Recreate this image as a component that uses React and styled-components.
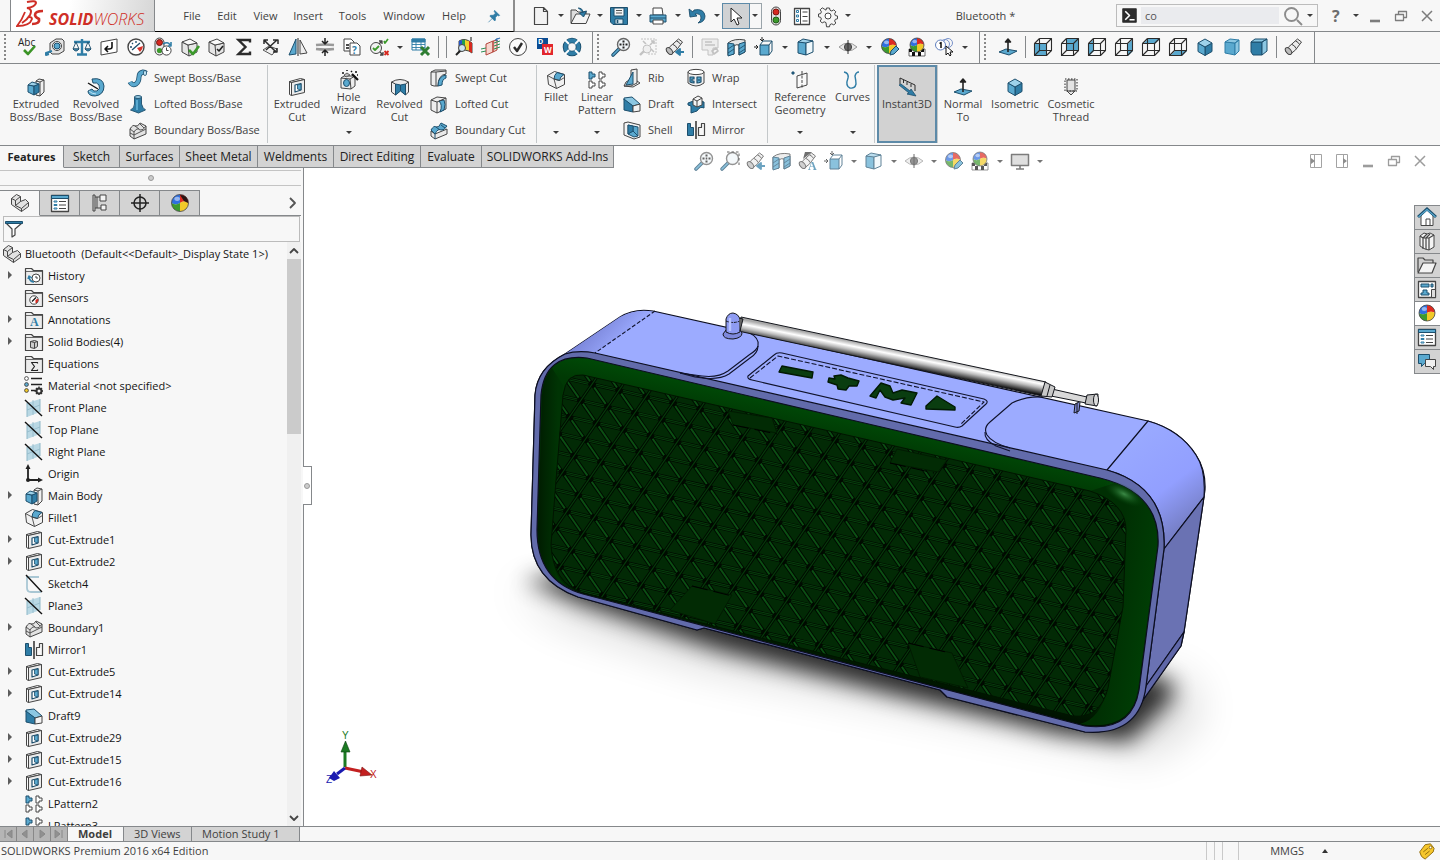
import React from "react";
import styled, { createGlobalStyle, css } from "styled-components";

const font = `"Open Sans", "Noto Sans", sans-serif`;
const line = "#85888b";
const panel = "#f7f7f7";
const tabGrey = "#d3d3d3";

const GlobalStyle = createGlobalStyle`
  * { box-sizing: border-box; }
  body { margin: 0; background: #fff; font: 11px/14px ${font}; color: #3f3f3f; }
  button, input { font: inherit; color: inherit; }
`;

/* ---------- icons ---------- */

const B = "#5aa9cf";
const D = "#1d4f6d";
const M = "#2f7da6";
const K = "#454545";

const Svg = styled.svg`
  display: block;
  flex: none;
  overflow: visible;
  fill: none;
  stroke: ${K};
  stroke-width: 1;
  stroke-linejoin: round;
`;

const plane = (
  <>
    <path d="M3 5l13-4v13L3 19z" fill="#b9d8e4" stroke="none" />
    <path d="M9 2v15M3 12l13-5" stroke="#8fb8c8" strokeWidth=".8" />
    <path d="M3 5v14M16 1v13" stroke="#8fb8c8" />
    <path d="M1 2l17 16" stroke="#111" strokeWidth="1.4" />
  </>
);

const ball = (r, cx = 10, cy = 10) => (
  <g stroke="none">
    <path d={`M${cx} ${cy}V${cy - r}A${r} ${r} 0 0 0 ${cx - r} ${cy}q${r / 2} ${r / 3} ${r} 0z`} fill="#2f6fe0" />
    <path d={`M${cx} ${cy}V${cy - r}A${r} ${r} 0 0 1 ${cx + r} ${cy}q${-r / 2} ${-r / 3} ${-r} 0z`} fill="#dd2a22" />
    <path d={`M${cx} ${cy}V${cy + r}A${r} ${r} 0 0 1 ${cx - r} ${cy}q${r / 2} ${r / 3} ${r} 0z`} fill="#3d9a2e" />
    <path d={`M${cx} ${cy}V${cy + r}A${r} ${r} 0 0 0 ${cx + r} ${cy}q${-r / 2} ${-r / 3} ${-r} 0z`} fill="#f2c928" />
    <circle cx={cx} cy={cy} r={r} fill="none" stroke="#444" strokeWidth=".8" />
    <ellipse cx={cx - r / 3} cy={cy - r / 2} rx={r / 3} ry={r / 4} fill="#fff" opacity=".5" />
  </g>
);

const checker = (
  <>
    <path d="M2 12h16v7H2z" fill="#fff" strokeWidth=".8" />
    <path d="M2 12h3v3H2zM8 12h3v3H8zM14 12h3v3h-3zM5 15h3v4H5zM11 15h3v4h-3z" fill="#111" stroke="none" />
  </>
);

const wire = (
  <path d="M1.500 6.500h12v12h-12zM6.500 1.500h12v12h-5M6.500 1.500v12h7M6.500 13.500l-5 5M1.500 6.500l5-5M13.500 6.500l5-5M13.500 18.500l5-5" stroke="#2b2b2b" strokeWidth="1.1" />
);
const face = (d) => (
  <>
    <path d={d} fill={B} stroke="none" />
    {wire}
  </>
);

const folder = (
  <>
    <path d="M1.500 18.500v-16h6l2 2h9v14z" fill="#ececec" strokeWidth="1.2" />
    <path d="M1.500 5.500h17" strokeWidth=".8" />
  </>
);
const flashlight = (
  <>
    <path d="M1.500 13l3-3 9-8 4 3-6 8-5 4q-4 1-5-4z" fill="#ececec" />
    <ellipse cx="4.500" cy="14" rx="2.400" ry="4" fill="#bdbdbd" transform="rotate(-40 4.500 14)" />
    <path d="M8 7.500q3 1 4 4M11.500 4q3 1 4 3.500" />
  </>
);
const lens = (
  <>
    <path d="M2 18l6-6" stroke={D} strokeWidth="3.6" strokeLinecap="round" />
    <path d="M2 18l6-6" stroke={B} strokeWidth="1.6" strokeLinecap="round" />
    <circle cx="12.500" cy="7.500" r="6" fill="#f2f7fa" stroke="#666" strokeWidth="1.4" />
  </>
);
const greyBox = (
  <>
    <path d="M2 5l6 3 9-2v9l-8 4-7-4z" fill="#e6e6e6" />
    <path d="M2 5l8-3 7 4-9 2z" fill="#fafafa" />
    <path d="M8 8l1 11" />
  </>
);
const patternGlyph = (
  <>
    <path d="M2 2h3v2h3v3H5v2H2z" fill={B} stroke={D} />
    <path d="M12 2h3v2h3v3h-3v2h-3zM2 11h3v2h3v3H5v2H2zM12 11h3v2h3v3h-3v2h-3z" fill="#fff" />
  </>
);

const icons = {
  abc: (
    <>
      <text x="0" y="9" fontSize="10" fontFamily="Open Sans" fill="#222" stroke="none">Abc</text>
      <path d="M6 13l4 4 7-8" stroke="#3b9426" strokeWidth="2.6" />
    </>
  ),
  measure: (
    <>
      <path d="M5 6l6-4h6l2 2v10l-5 3H7l-2-2z" fill="#e4e4e4" />
      <circle cx="12" cy="9" r="4.500" fill="#fff" />
      <circle cx="12" cy="9" r="3" fill={B} stroke={D} />
      <path d="M7 14l-6 2v2l3-1" stroke={M} strokeWidth="2" />
    </>
  ),
  scale: (
    <>
      <path d="M10 2v15M5 17.500h10M2 5h16" stroke={M} strokeWidth="2.4" />
      <path d="M4 5l-3 7h6zM16 5l-3 7h6z" stroke={D} strokeWidth=".9" />
      <path d="M1 12h6q-3 4-6 0zM13 12h6q-3 4-6 0z" fill={B} stroke={D} />
    </>
  ),
  section2: (
    <>
      <path d="M2 5l16-3v13L2 18z" fill="#fff" />
      <path d="M13 5v5q0 2-3 2H7M9 9l-3 3 3 3" stroke="#111" strokeWidth="1.6" />
    </>
  ),
  gauge: (
    <>
      <circle cx="10" cy="10" r="8" fill="#fff" strokeWidth="1.4" />
      <path d="M17 9a8 8 0 0 1-3 6l-3-4z" fill="#d6322a" stroke="none" />
      <path d="M6 13l8-7M4 10h2M10 4v2M6 6l1 1" stroke={D} strokeWidth="1.3" />
    </>
  ),
  lightClock: (
    <>
      <rect x="2" y="1" width="9" height="17" rx="4.500" fill="#e8e8e8" />
      <circle cx="6.500" cy="5.500" r="3" fill="#d6281f" stroke="#6d1510" />
      <circle cx="6.500" cy="13.500" r="2.600" fill="#3b9a2b" stroke="none" />
      <circle cx="13.500" cy="13.500" r="4.600" fill="#fff" />
      <path d="M13.500 10.500v3h2" />
      <path d="M10 7q5-3 7 1M18 5v4h-3" stroke={M} strokeWidth="1.600" />
    </>
  ),
  boxCheck: (
    <>
      {greyBox}
      <path d="M9 13l4 4 6-8" stroke="#3b9a2b" strokeWidth="2.6" />
    </>
  ),
  boxTick: (
    <>
      {greyBox}
      <path d="M10 12l2 2 4-5" stroke="#222" strokeWidth="1.6" />
    </>
  ),
  sigma: <path d="M16 5.500V3H4.500l7 7-7 7H16v-2.500" stroke="#2c2c2c" strokeWidth="2.4" strokeLinejoin="miter" />,
  arrowsX: (
    <>
      <path d="M2 13l6-4 8 3-5 6z" fill="#f0f0f0" strokeWidth=".9" />
      <path d="M3 3l12 12M16 3L5 13M3 7V3h4M12 3h5v4M16 11v4h-4" stroke="#2b2b2b" strokeWidth="1.5" />
    </>
  ),
  draftTri: (
    <>
      <path d="M8 2v15l-7 1z" fill={B} stroke={D} />
      <path d="M10 1v18" strokeWidth="1.2" />
      <path d="M12 3l7 13-7 1z" fill="#eee" />
    </>
  ),
  thickness: (
    <>
      <path d="M1 8q9-1 18 0M1 12q9 1 18 0" stroke="#999" strokeWidth="2.4" />
      <path d="M10 1v5M7 4l3 3 3-3M10 19v-5M7 16l3-3 3 3" stroke="#222" strokeWidth="1.500" />
    </>
  ),
  compareDoc: (
    <>
      <path d="M2 2h7l3 3v9H2z" fill="#fff" />
      <path d="M8 6h7l3 3v9H8z" fill="#fff" />
      <path d="M4 8h3M4 11h3" stroke="#111" strokeWidth="1.600" />
      <text x="10" y="17" fontSize="10" fontWeight="700" fontFamily="Open Sans" fill={M} stroke="none">?</text>
    </>
  ),
  checkActive: (
    <>
      <circle cx="7" cy="11" r="5.500" fill="#f2f2f2" />
      <path d="M4 11l2 2 4-4" stroke="#3b9a2b" strokeWidth="1.800" />
      <path d="M10 7l3-3M11 15l3 3M10 4h3v3M14 15v3h-3" strokeWidth="1.300" />
      <path d="M15 4l1 2 3-4" stroke="#3b9a2b" strokeWidth="1.700" />
      <path d="M15.500 14l4 4M19.500 14l-4 4" stroke="#d6281f" strokeWidth="1.800" />
    </>
  ),
  excel: (
    <>
      <path d="M1 2h13v11H1z" fill="#fff" stroke={M} />
      <path d="M1 2h13v3H1z" fill={M} stroke={M} />
      <path d="M1 7.500h13M1 10.500h13M5 3v10M10 3v10" stroke={M} strokeWidth=".9" />
      <path d="M10 10l8 8M18 10l-8 8" stroke="#2e7d32" strokeWidth="3" />
    </>
  ),
  rainbow: (
    <>
      <path d="M5 4q6-4 13 2v10q-6-5-13-1z" fill="#f2d22b" stroke="#444" />
      <path d="M5 4l3-1v10l-3 2z" fill="#2455c9" stroke="none" />
      <path d="M8 3l3-.2V13H8z" fill="#25a04a" stroke="none" />
      <path d="M15 4l3 2v10l-3-2z" fill="#d6281f" stroke="none" />
      <circle cx="8" cy="11" r="3.500" fill="#cfe6f0" />
      <path d="M2 18l4-4" stroke="#222" strokeWidth="2" />
      <path d="M17 0v4" strokeWidth="1.300" />
    </>
  ),
  flow: (
    <>
      <path d="M5 7l7-3v11l-7 3zM12 4l4-1v10l-4 2z" fill="#f6d5ce" stroke="#b4453a" />
      <path d="M0 12l5-1M0 15l5-1M13 6l6-2M13 9l6-2M13 12l6-2" stroke="#2d8f55" />
      <path d="M16 1v3M14 3l5-2" stroke="#356fb0" strokeWidth="1.200" />
    </>
  ),
  okCircle: (
    <>
      <circle cx="10" cy="10" r="8.500" fill="#fbfbfb" />
      <path d="M6 10l3 4 5-8" stroke="#2b2b2b" strokeWidth="2.400" />
    </>
  ),
  dw: (
    <>
      <rect x="2" y="1" width="11" height="11" fill="#0a4c93" stroke="none" />
      <rect x="7" y="7" width="11" height="11" fill="#e2262d" stroke="none" />
      <text x="3" y="7" fontSize="7" fontWeight="700" fontFamily="Open Sans" fill="#fff" stroke="none">D</text>
      <text x="9" y="16" fontSize="8" fontWeight="700" fontFamily="Open Sans" fill="#fff" stroke="none">W</text>
    </>
  ),
  lifebuoy: (
    <>
      <circle cx="10" cy="10" r="6.500" stroke={D} strokeWidth="5.600" />
      <circle cx="10" cy="10" r="6.500" stroke={M} strokeWidth="3.800" />
      <path d="M3 3l4 4M17 3l-4 4M3 17l4-4M17 17l-4-4" stroke="#fff" strokeWidth="1.800" />
    </>
  ),
  zoomFit: (
    <>
      {lens}
      <path d="M12.500 3.500v8M8.500 7.500h8" strokeDasharray="2 4" stroke="#222" strokeWidth="2" />
      <path d="M12.500 6.500v2" stroke="#222" strokeWidth="1.600" />
    </>
  ),
  zoomArea: (
    <>
      {lens}
      <path d="M7 1h12v13" strokeDasharray="2.500 2" stroke="#222" />
    </>
  ),
  zoomGrey: (
    <g stroke="#c2c2c2">
      <path d="M3 2h15v15H9" strokeDasharray="2 1" />
      <circle cx="9" cy="12" r="4" fill="#efefef" />
      <path d="M2 18l4-4" strokeWidth="2.400" />
      <path d="M5 4l3 3M16 4l-4 4M13 4h3v3M13 12l3 3" strokeWidth="1.600" />
    </g>
  ),
  prevView: (
    <>
      {flashlight}
      <path d="M19 15h-6M15 12l-4 3 4 3z" fill={M} stroke={M} strokeWidth="1.800" />
    </>
  ),
  flash: flashlight,
  flashA: (
    <>
      {flashlight}
      <path d="M7 1h7L5 8z" fill="#333" stroke="none" />
      <text x="10" y="19" fontSize="12" fontWeight="700" fontFamily="Liberation Serif" fill={M} stroke="none">A</text>
    </>
  ),
  boardGrey: (
    <g stroke="#c2c2c2">
      <path d="M2 2h16v9h-5v7H8v-5H2z" fill="#ededed" />
      <path d="M5 5h7M5 8h10M12 14l4-3 2 3-4 3z" strokeWidth="1.600" />
    </g>
  ),
  sectionView: (
    <>
      <path d="M1 6q6-5 17-3v12l-6 3V8q-3-1-5 1v8l-6 1z" fill="#e6e6e6" />
      <path d="M1 6l6 1v10l-6 2zM12 7l6-2v10l-6 3z" fill={B} stroke={D} />
      <path d="M1 12l6-4M1 16l6-4M12 12l6-4M12 16l6-4" stroke={D} strokeWidth=".9" />
    </>
  ),
  viewOrient: (
    <>
      <path d="M6 8h9v10H6z" fill={B} stroke={D} />
      <path d="M6 8l3-4h9v10l-3 4M15 8l3-4" stroke={D} />
      <path d="M8 0v4M6 2l2 2 2-2M0 10h4M2 8l2 2-2 2" stroke="#222" />
    </>
  ),
  displayStyle: (
    <>
      <path d="M2 5h8v13l-8-2z" fill={B} stroke={D} />
      <path d="M10 5l7-1v11l-7 3z" fill="#eef7fb" stroke={D} />
      <path d="M2 5l5-3 10 2-7 2z" fill="#9fd0e8" stroke={D} />
    </>
  ),
  eye: (
    <>
      <path d="M1 10q9-8 18 0-9 8-18 0z" fill="#e8e8e8" stroke="#999" />
      <circle cx="10" cy="10" r="3.600" fill="#666" stroke="#444" />
      <path d="M10 3v14" stroke="#333" />
    </>
  ),
  appearance: (
    <>
      {ball(7.5, 9, 9)}
      <path d="M10 18l1-4 5-5 3 3-5 5z" fill={B} stroke={D} />
    </>
  ),
  scene: (
    <>
      {checker}
      {ball(7, 10, 8)}
    </>
  ),
  oneClick: (
    <>
      <circle cx="14" cy="6" r="4.500" stroke="#7892c9" />
      <circle cx="11" cy="7" r="4.500" stroke="#7892c9" />
      <circle cx="6.500" cy="8" r="5" fill="#fff" stroke="#5f7fbf" />
      <path d="M5.500 6.500l1.500-1v5.500" stroke="#111" strokeWidth="1.500" />
      <path d="M12 9v9l2-2 2 3 1-1-1-3h3z" fill="#fff" stroke="#111" />
    </>
  ),
  normalTo: (
    <>
      <path d="M1 15l7-3 11 2-8 4z" fill={B} stroke={D} />
      <path d="M10 15V3M7.500 5L10 2l2.500 3z" stroke="#222" strokeWidth="1.600" />
    </>
  ),
  vFront: face("M2 7h12v12H2z"),
  vBack: face("M7 2h12v12H7z"),
  vLeft: face("M2 7l5-5v12l-5 5z"),
  vRight: face("M14 7l5-5v12l-5 5z"),
  vTop: face("M2 7l5-5h12l-5 5z"),
  vBottom: face("M2 19l5-5h12l-5 5z"),
  isometric: (
    <>
      <path d="M10 10v8.500l7-4V6z" fill={M} stroke={D} />
      <path d="M10 10v8.500l-7-4V6z" fill={B} stroke={D} />
      <path d="M10 2l7 4-7 4-7-4z" fill="#9ed2ea" stroke={D} />
    </>
  ),
  trimetric: (
    <>
      <path d="M3 5l10 1v12l-10-2z" fill={B} stroke={M} />
      <path d="M3 5l5-3 9 1-4 3zM13 6l4-3v11l-4 4z" fill="#8cc7e2" stroke={M} />
    </>
  ),
  dimetric: (
    <>
      <path d="M2 5h11v13H4l-2-3z" fill={M} stroke={D} />
      <path d="M2 5l4-3h12l-5 3zM13 5l5-3v12l-5 4z" fill="#8cc7e2" stroke={D} />
    </>
  ),
  newDoc: <path d="M3.500 1.500h9l4 4v13h-13zM12.500 1.500v4h4" fill="#f2f2f2" strokeWidth="1.200" />,
  open: (
    <>
      <path d="M1 17V4h5l2 2h8v3" fill="#ddd" />
      <path d="M1 17.500L6 8h14l-4 9.500z" fill="#f4f4f4" />
      <path d="M8 2q5 0 5 5M9.500 7l4 4 3-6z" fill={M} stroke={D} />
    </>
  ),
  save: (
    <>
      <path d="M1.500 1.500h17v17H4l-2.500-2.500z" fill={M} stroke={D} />
      <path d="M5 2h10v8H5z" fill="#f5f5f5" stroke={D} />
      <path d="M7 4.500h6M7 7h6" strokeWidth=".9" />
      <path d="M6 13h8v5H6z" fill="#d6e8f0" stroke={D} />
      <path d="M8.500 14v3" stroke={D} strokeWidth="1.600" />
    </>
  ),
  print: (
    <>
      <path d="M5 2h9l1 7H5z" fill="#fff" />
      <path d="M2 9h16v7H2z" fill={B} stroke={D} />
      <path d="M2 12h16" stroke={D} />
      <path d="M5 14h10v4H5z" fill="#fff" />
    </>
  ),
  undo: <path d="M2 3l1 8 7-1-2-2q6-1 6 4 0 3-3 5 7-1 7-7-1-8-11-6L6 6z" fill={M} stroke={D} strokeWidth=".9" />,
  cursor: <path d="M5 2v14l3-3 3 6 2-1-2-6h5z" fill="#fff" stroke="#222" />,
  traffic: (
    <>
      <rect x="5.500" y="1" width="9" height="18" rx="4.500" fill="#dedede" />
      <circle cx="10" cy="6" r="3" fill="#d6281f" stroke="#7c1610" />
      <circle cx="10" cy="14" r="3" fill="#3b9a2b" stroke="#1f5c16" />
    </>
  ),
  options: (
    <>
      <path d="M2.500 2.500h15v16h-15z" fill="#fff" strokeWidth="1.300" />
      <path d="M8.500 2v16" />
      <path d="M4.500 4.500h2v2h-2zM4.500 9h2v2h-2zM4.500 13.500h2v2h-2z" stroke={M} />
      <path d="M10.500 6h5M10.500 10.500h5M10.500 15h5" />
    </>
  ),
  gear: (
    <>
      <path
        d="M8.500 2h3l.5 2.200 1.800.8 2-1.200 2 2-1.200 2 .8 1.800 2.100.4v2.800l-2.100.5-.8 1.700 1.200 2-2 2-2-1.200-1.800.8-.5 2.200h-3L8 16.600l-1.800-.8-2 1.200-2-2 1.200-2-.8-1.700-2.100-.5V8l2.100-.4.8-1.800-1.200-2 2-2 2 1.200L8 4.200z"
        fill="#f5f5f5"
      />
      <circle cx="10" cy="10" r="3" fill="#fff" />
    </>
  ),
  pin: <path d="M11 2l7 7-1 1-2-1-3 3v4l-1 1-7-7 1-1h4l3-3-2-3zM8 13l-6 6" fill={M} stroke={M} strokeWidth="1" />,
  prompt: (
    <>
      <rect x="2" y="2" width="16" height="16" fill="#2c2c2c" stroke="#2c2c2c" />
      <path d="M5 5l5 5-5 5M10 15h6" stroke="#fff" strokeWidth="1.800" />
    </>
  ),
  search: <path d="M14 14l5 5M15 8.500a6.500 6.500 0 1 1-13 0 6.500 6.500 0 0 1 13 0z" stroke="#8c8c8c" strokeWidth="1.900" />,
  help: <text x="6" y="16" fontSize="16" fontWeight="700" fontFamily="Open Sans" fill="#6d6d6d" stroke="none">?</text>,
  minimize: <path d="M5 15h10" stroke="#7c7c7c" strokeWidth="2.600" />,
  restore: <path d="M4.500 8.500h8v6h-8zM7.500 8V5.500h8v6h-3" stroke="#7c7c7c" strokeWidth="1.300" />,
  close: <path d="M5 5l10 10M15 5L5 15" stroke="#7c7c7c" strokeWidth="1.500" />,
  paneLeft: (
    <>
      <path d="M4.500 3.500h11v13h-11zM8.500 3.500v13" stroke="#858585" />
      <path d="M9 10l-4-3v6z" fill="#666" stroke="none" />
    </>
  ),
  paneRight: (
    <>
      <path d="M4.500 3.500h11v13h-11zM11.500 3.500v13" stroke="#858585" />
      <path d="M11 7v6l4-3z" fill="#666" stroke="none" />
    </>
  ),
  monitor: (
    <>
      <path d="M1.500 3.500h17v11h-17z" fill="#d2d2d2" strokeWidth="1.500" />
      <path d="M10 14v4M6 18h8" strokeWidth="1.600" />
    </>
  ),
  extrude: (
    <>
      <path d="M10 4l3-2 5 1v12l-4 4-4-1z" fill="#f0f0f0" />
      <path d="M14 5v14M10 4l4 1 4-2" />
      <path d="M2 8l6 1v9l-6-3z" fill={B} stroke={D} />
      <path d="M8 9l5-2v8l-5 3z" fill={M} stroke={D} />
      <path d="M2 8l4-3 7 2-5 2z" fill="#9ed2ea" stroke={D} />
    </>
  ),
  revolve: (
    <>
      <path d="M6 2q11-2 12 7 0 9-9 10-7 0-7-5l4-2q1 3 5 2 4-2 2-6-2-3-6-2z" fill={B} stroke={D} />
      <path d="M2 6l10 6" stroke="#111" strokeWidth="1.400" />
      <path d="M3 14q3 3 7 3" stroke="#bfe2f2" />
    </>
  ),
  swept: (
    <>
      <path d="M2 14q2 4 6 2 3-2 3-7 0-4 4-5 2 0 3 1" stroke={D} strokeWidth="5" />
      <path d="M2 14q2 4 6 2 3-2 3-7 0-4 4-5 2 0 3 1" stroke={B} strokeWidth="3.400" />
      <ellipse cx="17" cy="5" rx="1.600" ry="2.600" fill="#bfe2f2" stroke={D} strokeWidth=".8" />
    </>
  ),
  loft: (
    <>
      <path d="M6.500 3h7v7q1 4 4 6l-7 3-8-3q4-2 4-6z" fill={M} stroke={D} strokeWidth=".9" />
      <ellipse cx="10" cy="3" rx="3.500" ry="1.400" fill="#a5d6ec" stroke={D} />
      <path d="M9 6v10" stroke={B} strokeWidth="2" />
    </>
  ),
  boundary: (
    <>
      <path d="M2 9q3-5 5-3 3 1 5-3l6 3v8L6 19l-4-3z" fill="#e3e3e3" />
      <path d="M2 9l4 3q3-5 6-2 3 1 6-4M6 12v7M7 6l4 3M12 4l4 4M2 13l4 2 12-6" strokeWidth=".9" />
    </>
  ),
  boundaryBlue: (
    <>
      <path d="M2 11l4 3 12-5v5L6 19l-4-3z" fill="#e9e9e9" />
      <path d="M2 10q3-5 5-3 3 1 5-4l6 3q-3 5-6 4-3-2-6 4z" fill={B} stroke={D} />
      <path d="M7 7l4 3M12 5l4 3M6 14v5" stroke={D} />
    </>
  ),
  cutExtrude: (
    <>
      <path d="M2.500 4.500l2 1v13l-2-1zM2.500 4.500l11-3 4 1-13 3z" fill="#fafafa" />
      <path d="M4.500 5.500l13-3v13l-13 3z" fill="#ececec" />
      <path d="M8 8l6-1.500V13l-6 2z" fill="#fff" stroke={D} strokeWidth="1.200" />
      <path d="M10.500 8L14 7v6l-3.500-1z" fill={B} stroke={D} strokeWidth=".8" />
    </>
  ),
  hole: (
    <>
      <path d="M2 8l3-2h11v10l-4 3-10-1z" fill="#ededed" />
      <path d="M2 8l9 1 5-3M11 9l1 10" />
      <ellipse cx="7.500" cy="13" rx="3" ry="3.500" fill={B} stroke={D} />
      <path d="M5 5l3-2 3 2-4 2z" fill="#bbb" strokeWidth=".8" />
      <path d="M13 4l6 6" stroke="#111" strokeWidth="2.200" />
      <path d="M4 2v2M8 0v1M17 1v2M12 1l1 1M18 5h1" stroke="#111" strokeWidth="1.500" />
    </>
  ),
  cutRevolve: (
    <>
      <path d="M1.500 5q8.500-5 17 0v10l-3 3-5-5-5 5-4-3z" fill="#ececec" />
      <path d="M5.500 7l5 1v6l-5 4zM10.500 8l5-1v11l-5-4z" fill={M} stroke={D} />
      <path d="M1.500 5l4 2M18.500 5l-3 2" />
    </>
  ),
  cutSwept: (
    <>
      <path d="M2 4l4-2h11v4q-8 1-8 12H5l-3-1z" fill="#ededed" />
      <path d="M17 7q-8 1-8 11l4-1q0-6 4-7z" fill={B} stroke={D} />
      <path d="M2 4h5v14M7 4l10-1" />
    </>
  ),
  cutLoft: (
    <>
      <path d="M2 6l6-3 9 1v11l-9 4-6-3z" fill="#ededed" />
      <path d="M10 7q4 4 1 11l4-2q2-6 0-10z" fill={B} stroke={D} />
      <path d="M2 6l6 2v11M8 8l9-4" />
    </>
  ),
  fillet: (
    <>
      <path d="M1.500 5.500l7-4 10 3v10l-8 4-8-4z" fill="#f1f1f1" />
      <path d="M8 9q0-4 3-6.500l7 2q-4 2-4.500 6z" fill={B} stroke={D} />
      <path d="M1.500 5.500L8 9l2.500 9.500M8 9l5.500 1.500M13.500 10.500l5-3" strokeWidth=".9" />
    </>
  ),
  pattern: patternGlyph,
  rib: (
    <>
      <path d="M9 2l6-1v14l-6 3H2l2-4 5-3z" fill="#ededed" />
      <path d="M11 4v12l-7 1z" fill={B} stroke={D} />
      <path d="M15 13l3 2-7 4-9-1" />
    </>
  ),
  draft: (
    <>
      <path d="M2 4l8-1 8 7-7 2-9-6z" fill="#8cc7e2" stroke={D} />
      <path d="M2 5l9 7v6l-9-2z" fill={M} stroke={D} />
      <path d="M11 12l7-2v7l-7 1z" fill="#f4f4f4" />
    </>
  ),
  shell: (
    <>
      <path d="M2 3l4-1 12 3v12l-6 2-10-4z" fill="#f4f4f4" />
      <path d="M6 5l10 2v9l-4 1-6-3z" fill={B} stroke={D} />
      <path d="M11 6v5l-5 3M11 11l5 5" stroke={D} />
      <path d="M6 5v9l5-3V6z" fill={M} stroke={D} strokeWidth=".8" />
    </>
  ),
  wrap: (
    <>
      <path d="M2 4v11q8 6 16 0V4" fill="#f1f1f1" />
      <ellipse cx="10" cy="4" rx="8" ry="2.600" fill="#fff" />
      <path d="M8 9H4v5q2 1 4 1v-2H6v-2h2zM11 9h4v5q-2 1-4 1zM13 11v2" fill={B} stroke={D} strokeWidth="1.200" />
    </>
  ),
  intersect: (
    <>
      <path d="M2 9l8-3 8 2v6q-4-2-7 3l-6 2v-7l-3-1z" fill={M} stroke={D} />
      <path d="M7 5l5-3 4 2v7l-5 2-4-2z" fill="#f4f4f4" />
      <path d="M7 5l4 2v6M11 7l5-3" />
    </>
  ),
  mirror: (
    <>
      <path d="M1.500 3.500h3v4h3v8h-6z" fill={M} stroke={D} />
      <path d="M10 1v18" stroke="#111" strokeWidth="1.300" />
      <path d="M18.500 3.500h-3v4h-3v8h6z" fill="#f8f8f8" strokeWidth="1.200" />
    </>
  ),
  refGeom: (
    <>
      <path d="M2 2h2v2H2z" fill={M} stroke={D} />
      <path d="M7 6l10-3v12l-10 3z" fill="#fafafa" />
      <path d="M12 1v18" strokeDasharray="3 1.500" />
    </>
  ),
  curves: <path d="M1 2q5 1 4 6-3 8 2 10 5 1 6-4 0-3-1-8 1-4 4-4" stroke={M} strokeWidth="1.400" />,
  instant: (
    <>
      <path d="M3 7V1l15 7v6M6.500 6V3M10 8V5M14 10V7" stroke="#2b2b2b" />
      <path d="M2 8l2-1 9 7 1-2 5 7-9-2 2-1z" fill={M} stroke={D} strokeWidth=".8" />
    </>
  ),
  thread: (
    <>
      <path d="M6 3h8v11l-4 4-4-4z" fill="#e3e3e3" />
      <path d="M4 2h12v12H4z" strokeDasharray="1.500 1.500" stroke="#222" />
      <path d="M6 14h8" />
    </>
  ),
  part: (
    <>
      <path d="M1.500 5.500l5-4 4 2v5l5-2 3 3v4l-7 5-10-7z" fill="#e2e2e2" />
      <path d="M1.500 5.500l4 2 5-4M5.500 7.500v5l6 3 7-6M11.500 15.500v3M10.500 8.500l-5 4" />
    </>
  ),
  property: (
    <>
      <path d="M1.500 2.500h17v16h-17z" fill="#fff" strokeWidth="1.300" />
      <path d="M1.500 2.500h17v3h-17z" fill={B} stroke={D} />
      <path d="M4 8h3v1H4zM4 11.500h3v1H4zM4 15h3v1H4z" stroke={M} />
      <path d="M9 8.500h7M9 12h7M9 15.500h7" />
    </>
  ),
  config: (
    <>
      <path d="M3 2v16h2V2zM5 4h5M5 15h7M7 4v11" />
      <path d="M10 2h6v6h-6zM11 12h5v5h-5z" fill="#f4f4f4" />
    </>
  ),
  target: (
    <>
      <circle cx="10" cy="10" r="6" stroke="#222" strokeWidth="1.500" />
      <path d="M10 1v18M1 10h18" stroke="#222" strokeWidth="1.500" />
    </>
  ),
  display: (
    <>
      {ball(8.5)}
      <path d="M10 2q8 0 8 8l-4-2z" fill="#2a1513" stroke="none" />
    </>
  ),
  filter: (
    <>
      <path d="M2 4l6 6v8l3-2v-6l7-6z" fill="#fff" strokeWidth="1.200" />
      <path d="M1.500 2.500h17v2h-17z" fill={M} stroke={D} />
    </>
  ),
  history: (
    <>
      {folder}
      <circle cx="12" cy="12" r="4" fill="#fff" />
      <path d="M12 10v2h2" />
      <path d="M5 11q1 5 5 5M4 13l1-3 3 2" stroke={M} strokeWidth="1.500" />
    </>
  ),
  sensors: (
    <>
      {folder}
      <circle cx="10" cy="12" r="4.200" fill="#fff" />
      <path d="M12 12l2-.5q0 2-2 3.500z" fill="#d6281f" stroke="#d6281f" />
      <path d="M8 13.500l4-4" stroke="#111" strokeWidth="1.200" />
    </>
  ),
  annotations: (
    <>
      {folder}
      <text x="6" y="16" fontSize="12" fontWeight="700" fontFamily="Liberation Serif" fill={M} stroke="none">A</text>
    </>
  ),
  bodies: (
    <>
      {folder}
      <path d="M6.500 9.500l4-1 3 1v5l-3 2-4-1zM6.500 9.500l4 1v6M10.500 10.500l3-1" fill="#ccc" />
    </>
  ),
  equations: (
    <>
      {folder}
      <path d="M13.500 9.500v-1h-6l3 4-3 4h6v-1" stroke="#222" strokeWidth="1.200" />
    </>
  ),
  material: (
    <>
      <path d="M7 2.500h11M7 8.500h11M7 14.500h5" stroke="#222" strokeWidth="1.500" />
      <circle cx="2.500" cy="2.500" r="1.900" fill="#fff" strokeWidth=".9" />
      <circle cx="2.500" cy="8.500" r="1.900" fill={B} strokeWidth=".9" />
      <circle cx="2.500" cy="14.500" r="1.900" fill="#f2c928" strokeWidth=".9" />
      <circle cx="15" cy="15" r="2.500" stroke="#333" strokeWidth="2" />
      <path d="M15 10.500v9M10.500 15h9M12 12l6 6M18 12l-6 6" stroke="#333" strokeDasharray="2 4.500" strokeWidth="1.400" />
    </>
  ),
  plane,
  origin: (
    <>
      <path d="M4 4v12h11" stroke="#222" strokeWidth="1.800" />
      <path d="M4 0L1.500 5h5zM19 16l-5-2.500v5z" fill="#222" stroke="none" />
      <circle cx="4" cy="16" r="2" fill="#222" stroke="none" />
    </>
  ),
  sketch: (
    <>
      <path d="M3 2v12q0 4 4 4h10M3 3h12" stroke="#a9c7d4" strokeWidth="1.800" />
      <path d="M2 1l16 17" stroke="#111" strokeWidth="1.400" />
    </>
  ),
  home: (
    <>
      <path d="M4 9v9.500h12V9l-6-6z" fill="#fff" />
      <path d="M9 18v-6h4v6" />
      <path d="M1 10l9-8 9 8" stroke={D} strokeWidth="3" strokeLinejoin="miter" />
      <path d="M1.500 10L10 2.500l8.500 7.500" stroke={B} strokeWidth="1.200" />
    </>
  ),
  books: (
    <>
      <path d="M3 5l4-3 3 1 3-1 4 2v12l-5 3-4-1-5-3z" fill="#f4f4f4" />
      <path d="M3 5l3 2v11M6 7l4-4M9 7v11M9 7l4-4M12 7v12M12 7l5-3M6 7l3 0 3 0" strokeWidth="1.200" />
    </>
  ),
  folderOpen: (
    <>
      <path d="M1 17V3h5l2 2h8v3" fill="#cfcfcf" strokeWidth="1.200" />
      <path d="M1 18l5-10h13l-4 10z" fill="#f4f4f4" strokeWidth="1.200" />
    </>
  ),
  palette: (
    <>
      <path d="M1.500 2.500h17v16h-17z" fill="#fff" strokeWidth="1.300" />
      <path d="M4 5h8v3H4zM14 5h2v3h-2zM4 16v-2h2v-3h4v3h2v2z" fill={B} stroke={D} />
      <path d="M14.500 10.500h4v8h-4z" fill="#ddd" />
    </>
  ),
  ball: ball(8),
  forum: (
    <>
      <path d="M1.500 3.500h11v9h-5l-3 3v-3h-3z" fill={B} stroke={D} />
      <path d="M8.500 8.500h10v7h-2v3l-3-3h-5z" fill="#f0f0f0" />
    </>
  ),
  tag: (
    <>
      <path d="M9 3l6-1 4 5-1 4-9 8q-5-2-6-8z" fill="#f5c62c" stroke="#8a6508" />
      <circle cx="15" cy="6" r="1.500" fill="#fff" stroke="#8a6508" />
      <path d="M7 11l5-4M9 14l5-4" stroke="#8a6508" />
    </>
  ),
};

const Icon = ({ name, size = 20 }) => (
  <Svg width={size} height={size} viewBox="0 0 20 20" aria-hidden="true">
    {icons[name]}
  </Svg>
);

/* ---------- shared ---------- */

const bare = css`
  border: 0;
  padding: 0;
  margin: 0;
  background: none;
`;

const IconButton = styled.button`
  ${bare}
  flex: none;
  display: flex;
  align-items: center;
  justify-content: center;
  width: ${(p) => p.$w || 27}px;
  height: 26px;
`;

const Caret = styled.span`
  width: 0;
  height: 0;
  border: 3px solid transparent;
  border-top: 3px solid #3c3c3c;
  border-bottom: 0;
`;

const Rule = styled.i`
  flex: none;
  width: 1px;
  height: 22px;
  margin: 0 3px 0 4px;
  background: ${line};
`;

const Grip = styled.i`
  flex: none;
  width: 3px;
  height: 26px;
  margin: 0 7px 0 4px;
  background: radial-gradient(circle at 1px 1px, #888 1px, transparent 1px) 0 0 / 3px 4px;
`;

const Tool = ({ item, pitch, caret }) => {
  if (item === "|") return <Rule />;
  if (item === "v")
    return (
      <IconButton $w={caret} aria-label="More">
        <Caret />
      </IconButton>
    );
  return (
    <IconButton $w={pitch} aria-label={item}>
      <Icon name={item} />
    </IconButton>
  );
};

const Tools = ({ items, pitch = 27, caret = 15 }) =>
  items.map((item, i) => <Tool key={i} item={item} pitch={pitch} caret={caret} />);

/* ---------- layout ---------- */

const Page = styled.div`
  display: flex;
  flex-direction: column;
  height: 100vh;
  min-height: 600px;
  overflow: hidden;
  background: ${panel};
`;

const TopBar = styled.header`
  display: flex;
  height: 32px;
  border-bottom: 1px solid ${line};
`;

const LogoBox = styled.div`
  display: flex;
  align-items: center;
  width: 145px;
  margin-left: 10px;
  padding-left: 5px;
  border: solid ${line};
  border-width: 0 1px;
  background: linear-gradient(100deg, #fff 40%, #d5d5d5);
`;

const Menu = styled.nav`
  display: flex;
  align-items: center;
  width: 360px;
  height: 32px;
  padding-left: 20px;
  border-right: 2px solid #8d8d8d;
  border-bottom: 1px solid #000;
`;

const MenuItem = styled.button`
  ${bare}
  flex: none;
  width: ${(p) => p.$w}px;
  text-align: center;
`;

const QuickTools = styled.div`
  display: flex;
  align-items: center;
  width: 340px;
  padding-left: 13px;
`;

const SelectBox = styled.div`
  display: flex;
  height: 26px;
  margin-right: 1px;
  border: 1px solid #9aa4aa;
  border-left: 0;

  button {
    height: 24px;
  }

  button:first-child {
    background: #d0d2d4;
    outline: 1px solid #5d8aa8;
  }
`;

const DocTitle = styled.h1`
  flex: 1;
  margin: 0;
  text-align: center;
  font: 11px/31px ${font};
`;

const SearchBox = styled.label`
  display: flex;
  align-items: center;
  width: 202px;
  height: 23px;
  margin: 4px 5px 0 0;
  padding-left: 4px;
  border: 1px solid #bcbcbc;

  input {
    flex: 1;
    min-width: 0;
    height: 17px;
    margin: 0 4px 0 3px;
    padding: 0 4px;
    border: 0;
    background: #eaebee;
    color: #555;
  }
`;

const WindowTools = styled.div`
  display: flex;
  align-items: center;
`;

const ToolRow = styled.div`
  display: flex;
  align-items: center;
  height: 32px;
  padding-bottom: 1px;
  border-bottom: 1px solid ${line};
`;

const Divider = styled.i`
  width: 1px;
  height: 32px;
  margin-left: 7px;
  background: ${line};
`;

const Ribbon = styled.div`
  display: flex;
  height: 82px;
  padding: 1px 0 2px 6px;
  border-bottom: 1px solid ${line};
`;

const BigButton = styled.button`
  ${bare}
  position: relative;
  display: flex;
  flex-direction: column;
  align-items: center;
  flex: none;
  width: ${(p) => p.$w}px;
  padding-top: ${(p) => (p.$drop ? 5 : 12)}px;
  line-height: 13px;
  ${(p) =>
    p.$active &&
    css`
      background: #d2d2d2;
      outline: 2px solid #5d8aa8;
      outline-offset: -2px;
    `}

  ${Caret} {
    position: absolute;
    bottom: 9px;
  }
`;

const SmallStack = styled.div`
  flex: none;
  width: ${(p) => p.$w}px;
  padding-left: ${(p) => p.$pad || 2}px;
`;

const SmallButton = styled.button`
  ${bare}
  display: flex;
  align-items: center;
  gap: 6px;
  height: 26px;
  white-space: nowrap;
`;

const GroupRule = styled.i`
  flex: none;
  width: 1px;
  margin-right: ${(p) => p.$after || 3}px;
  background: #c4c8ca;
`;

const TabStrip = styled.div`
  position: relative;
  z-index: 1;
  display: flex;
  height: 22px;
  background: #fff;
`;

const RibbonTab = styled.button`
  ${bare}
  flex: none;
  width: ${(p) => p.$w}px;
  border: solid ${line};
  border-width: 0 1px 1px 0;
  background: ${tabGrey};
  color: #222;
  font-size: 12px;
  ${(p) =>
    p.$active &&
    css`
      font-size: 11px;
      background: ${panel};
      font-weight: 700;
      border-bottom-color: ${panel};
    `}
`;

const HeadsUp = styled.div`
  display: flex;
  align-items: center;
  flex: 1;
  padding: 8px 0 0 77px;
  opacity: 0.7;
`;

const DocControls = styled.div`
  display: flex;
  align-items: center;
  padding: 8px 7px 0 0;
  opacity: 0.75;
`;

const Body = styled.main`
  display: flex;
  flex: 1;
  min-height: 0;
`;

const Side = styled.aside`
  position: relative;
  display: flex;
  flex-direction: column;
  width: 304px;
  flex: none;
  border-right: 1px solid ${line};
`;

const Splitter = styled.div`
  display: flex;
  align-items: center;
  justify-content: center;
  height: 16px;
  margin: 2px 2px 4px 0;
  border: solid #c4c4c4;
  border-width: 1px 0;
`;

const Dot = styled.i`
  width: 6px;
  height: 6px;
  border: 1px solid #999;
  border-radius: 50%;
  background: #ccc;
`;

const SideTabs = styled.div`
  display: flex;
  align-items: center;
  height: 26px;
  margin-right: 2px;
  border-bottom: 1px solid ${line};
`;

const SideTab = styled.button`
  ${bare}
  display: flex;
  align-items: center;
  justify-content: center;
  width: 40px;
  height: 26px;
  margin-bottom: -1px;
  border: solid ${line};
  border-width: 1px 1px 1px 0;
  background: ${(p) => (p.$active ? panel : tabGrey)};
  border-bottom-color: ${(p) => (p.$active ? panel : line)};
`;

const Chevron = styled.button`
  ${bare}
  width: 20px;
  height: 20px;
  margin-left: auto;
`;

const FilterBox = styled.div`
  display: flex;
  align-items: center;
  height: 26px;
  margin: 0 3px;
  border: 1px solid #bbb;
`;

const TreeArea = styled.div`
  display: flex;
  flex: 1;
  min-height: 0;
  margin-right: 2px;
`;

const Tree = styled.ul`
  flex: 1;
  margin: 0;
  padding: 1px 0 0;
  overflow: hidden;
  list-style: none;
  color: #141414;
`;

const TreeRow = styled.li`
  display: flex;
  align-items: center;
  gap: ${(p) => (p.$root ? 3 : 4)}px;
  height: 22px;
  padding-left: ${(p) => (p.$root ? 2 : 8)}px;
  white-space: pre;
`;

const Twist = styled.i`
  width: 12px;
  margin-top: -3px;

  &::before {
    content: "";
    display: ${(p) => (p.$on ? "block" : "none")};
    width: 0;
    border: 4px solid transparent;
    border-left: 4px solid #5c5c5c;
    border-right: 0;
  }
`;

const ScrollTrack = styled.div`
  display: flex;
  flex-direction: column;
  width: 14px;
  background: #f0f0f0;
`;

const ScrollThumb = styled.div`
  flex: none;
  height: 30%;
  background: #cbcbcb;
`;

const ScrollButton = styled.button`
  ${bare}
  display: flex;
  align-items: center;
  justify-content: center;
  height: 17px;
  margin-top: ${(p) => (p.$end ? "auto" : 0)};
`;

const Flyout = styled.button`
  ${bare}
  position: absolute;
  left: 303px;
  top: 298px;
  display: flex;
  align-items: center;
  justify-content: center;
  width: 9px;
  height: 39px;
  border: 1px solid ${line};
  border-left: 0;
  background: #fff;
  z-index: 1;
`;

const Viewport = styled.section`
  position: relative;
  flex: 1;
  min-width: 0;
  background: #fff;
`;

const Canvas = styled.svg`
  display: block;
  width: 100%;
  height: 100%;
  stroke-linejoin: round;
`;

const TaskPane = styled.div`
  position: absolute;
  right: 0;
  top: 37px;
  width: 26px;
  border: 1px solid ${line};
  border-width: 1px 0 0 1px;
`;

const TaskButton = styled.button`
  ${bare}
  display: flex;
  align-items: center;
  justify-content: center;
  width: 25px;
  height: 24px;
  padding: 0 1px 1px 0;
  border-bottom: 1px solid ${line};
  background: ${(p) => (p.$active ? "#fff" : tabGrey)};
`;

const BottomTabs = styled.div`
  display: flex;
  height: 16px;
  border: solid ${line};
  border-width: 1px 0;
`;

const Player = styled.button`
  ${bare}
  width: 17px;
  border-right: 1px solid #888;
  background: #b5b5b5;
`;

const BottomTab = styled.button`
  ${bare}
  width: ${(p) => p.$w}px;
  padding-left: 10px;
  border-right: 1px solid ${line};
  background: ${(p) => (p.$active ? panel : tabGrey)};
  font-weight: ${(p) => (p.$active ? 700 : 400)};
  line-height: 12px;
  text-align: left;
`;

const Status = styled.footer`
  display: flex;
  align-items: center;
  height: 18px;
  padding: 0 5px 0 1px;
`;

const StatusLines = styled.i`
  width: 33px;
  height: 18px;
  margin: 0 31px 0 auto;
  border: solid #c9c9c9;
  border-width: 0 1px;
  background: linear-gradient(90deg, transparent 7px, #c9c9c9 7px 8px, transparent 8px 15px, #c9c9c9 15px 16px, transparent 16px);
`;

const Units = styled.button`
  ${bare}
  display: flex;
  align-items: center;
  gap: 18px;
  margin-right: 89px;
`;

/* ---------- data ---------- */

const menu = [["File", 34], ["Edit", 36], ["View", 41], ["Insert", 44], ["Tools", 45], ["Window", 58], ["Help", 42]];

const tabs = [
  ["Features", 64], ["Sketch", 56], ["Surfaces", 60], ["Sheet Metal", 78], ["Weldments", 76],
  ["Direct Editing", 87], ["Evaluate", 61], ["SOLIDWORKS Add-Ins", 132],
];

const tree = [
  ["history", "History", 1], ["sensors", "Sensors"], ["annotations", "Annotations", 1], ["bodies", "Solid Bodies(4)", 1],
  ["equations", "Equations"], ["material", "Material <not specified>"], ["plane", "Front Plane"], ["plane", "Top Plane"],
  ["plane", "Right Plane"], ["origin", "Origin"], ["extrude", "Main Body", 1], ["fillet", "Fillet1"],
  ["cutExtrude", "Cut-Extrude1", 1], ["cutExtrude", "Cut-Extrude2", 1], ["sketch", "Sketch4"], ["plane", "Plane3"],
  ["boundary", "Boundary1", 1], ["mirror", "Mirror1"], ["cutExtrude", "Cut-Extrude5", 1], ["cutExtrude", "Cut-Extrude14", 1],
  ["draft", "Draft9"], ["cutExtrude", "Cut-Extrude29", 1], ["cutExtrude", "Cut-Extrude15", 1], ["cutExtrude", "Cut-Extrude16", 1],
  ["pattern", "LPattern2"], ["pattern", "LPattern3"],
];

/* ---------- parts ---------- */

const Logo = () => (
  <svg width="138" height="31" viewBox="0 0 138 31" fill="none" stroke="#cf2e26" aria-label="SOLIDWORKS">
    <path d="M11 2q9-2 9 1-1 4-9 5 6 1 3 7-3 5-8 8" strokeWidth="2" />
    <path d="M9 12q-3 8-8 14 13 0 15-7 0-2-3-2" strokeWidth="1.800" />
    <path d="M27 11q-8 0-8 4 0 2 4 4 1 5-7 5" strokeWidth="2.600" />
    <text x="33" y="25" fontFamily="Open Sans" fontStyle="italic" fontSize="16" fill="#cf2e26" stroke="none">
      <tspan fontWeight="700">SOLID</tspan>
      <tspan fontWeight="300">WORKS</tspan>
    </text>
  </svg>
);

const Big = ({ icon, label, w, drop, active }) => (
  <BigButton $w={w} $drop={drop} $active={active}>
    <Icon name={icon} />
    {label.split("|").map((t) => (
      <span key={t}>{t}</span>
    ))}
    {drop && <Caret />}
  </BigButton>
);

const Small = ({ w, pad, items }) => (
  <SmallStack $w={w} $pad={pad}>
    {items.map(([icon, label]) => (
      <SmallButton key={label}>
        <Icon name={icon} />
        {label}
      </SmallButton>
    ))}
  </SmallStack>
);

const mesh = "M583 375L860 438 1090 491Q1126 503 1126 530L1123 607 1108 688Q1100 719 1073 716L860 663 583 593Q553 583 551 545L556 480 563 395Q566 373 583 375Z";

// grille lattice: ribs run along a, along b and along a + b
const a = [27, 6.2];
const b = [-11.3, 16.4];
const at = (u, v) => `${(565 + u * a[0] + v * b[0]).toFixed(1)} ${(378 + u * a[1] + v * b[1]).toFixed(1)}`;
const range = (from, to) => Array.from({ length: to - from + 1 }, (_, i) => from + i);
const ribsA = range(-3, 15).map((k) => `M${at(-3, k)}L${at(34, k)}`).join("");
const ribsB = range(-3, 34).map((k) => `M${at(k, -4)}L${at(k, 26)}`).join("");
const ribsC = range(-16, 26).map((k) => `M${at(k - 3, -3)}L${at(k + 20, 20)}`).join("");

const Grille = () => (
  <g clipPath="url(#meshClip)" fill="none">
    <path d={mesh} fill="#022a05" />
    <path d={ribsA} stroke="#000a00" strokeWidth="4" />
    <path d={ribsC} stroke="#000a00" strokeWidth="3.800" />
    <path d={ribsA} stroke="#07420d" strokeWidth="2.600" strokeDasharray="20 7.700" strokeDashoffset="-4" />
    <path d={ribsA} stroke="#011001" strokeWidth=".8" />
    <path d={ribsC} stroke="#0b4f13" strokeWidth="1.900" strokeDasharray="20 7.500" strokeDashoffset="-4" />
    <path d={ribsB} stroke="#000a00" strokeWidth="3" />
    <path d={ribsB} stroke="#053a0a" strokeWidth="1.200" />
  </g>
);

const Speaker = () => (
  <Canvas viewBox="304 168 1136 658" role="img" aria-label="Bluetooth speaker model">
    <defs>
      <clipPath id="meshClip">
        <path d={mesh} />
      </clipPath>
      <linearGradient id="rod" gradientUnits="userSpaceOnUse" x1="895" y1="350" x2="892" y2="365">
        <stop offset="0" stopColor="#aaa" />
        <stop offset=".3" stopColor="#fff" />
        <stop offset=".55" stopColor="#bbb" />
        <stop offset="1" stopColor="#111" />
      </linearGradient>
      <linearGradient id="bezel" gradientUnits="userSpaceOnUse" x1="880" y1="422" x2="826" y2="665">
        <stop offset="0" stopColor="#004a07" />
        <stop offset=".1" stopColor="#003904" />
        <stop offset=".9" stopColor="#002602" />
        <stop offset="1" stopColor="#001200" />
      </linearGradient>
      <linearGradient id="bezelRight" gradientUnits="userSpaceOnUse" x1="1112" y1="600" x2="1156" y2="606">
        <stop offset="0" stopColor="#002f03" />
        <stop offset="1" stopColor="#003f05" />
      </linearGradient>
      <linearGradient id="bezelLeft" gradientUnits="userSpaceOnUse" x1="536" y1="480" x2="558" y2="480">
        <stop offset="0" stopColor="#001a00" />
        <stop offset="1" stopColor="#003404" />
      </linearGradient>
      <radialGradient id="shine">
        <stop offset="0" stopColor="#3b8a46" />
        <stop offset="1" stopColor="#004607" stopOpacity="0" />
      </radialGradient>
      <linearGradient id="corner" gradientUnits="userSpaceOnUse" x1="1130" y1="440" x2="1190" y2="520">
        <stop offset="0" stopColor="#99a9ff" />
        <stop offset=".6" stopColor="#929fff" />
        <stop offset="1" stopColor="#7780c8" />
      </linearGradient>
      <linearGradient id="cornerLeft" gradientUnits="userSpaceOnUse" x1="598" y1="322" x2="622" y2="345">
        <stop offset="0" stopColor="#7b86da" />
        <stop offset="1" stopColor="#9cabff" />
      </linearGradient>
      <filter id="soft" x="-20%" y="-50%" width="140%" height="200%">
        <feGaussianBlur stdDeviation="11" />
      </filter>
      <filter id="wide" x="-20%" y="-50%" width="140%" height="200%">
        <feGaussianBlur stdDeviation="22" />
      </filter>
    </defs>

    <path d="M510 585L1190 680 1200 720 1150 755 700 665 560 620Z" fill="#000" opacity=".15" filter="url(#wide)" />
    <path d="M524 580L600 570 1170 680 1174 696 1128 742 1060 734 900 696 720 650 580 604Z" fill="#000" opacity=".8" filter="url(#soft)" />

    <g stroke="#0c0e20" strokeWidth="1.200">
      {/* housing */}
      <path
        d="M565 354L620 317Q634 308 653 311L1148 421Q1180 430 1196 455 1206 470 1205 490L1184 632 1181 646 1143 700Q1128 734 1085 732L947 697 940 690 704 628 697 630 578 597Q531 580 531 535L535 395Q537 368 565 354Z"
        fill="#9cabff"
      />
      <path d="M565 354L620 317Q634 309 655 312L595 353Q578 350 565 354Z" fill="url(#cornerLeft)" stroke="none" />
      <path d="M1148 421Q1180 430 1196 455 1206 470 1204 497L1164 549Q1167 487 1107 470Z" fill="url(#corner)" />
      <path d="M1204 497L1184 632 1146 686 1164 549Z" fill="#6a72b3" />
      <path d="M1184 632L1181 646 1143 700 1146 686Z" fill="#5f67a8" />
      {/* front rim */}
      <path
        d="M565 354Q578 350 595 353L1107 470Q1167 487 1164 549L1146 686Q1140 736 1085 732L947 697 940 690 704 628 697 630 578 597Q531 580 531 535L535 395Q537 368 565 354Z"
        fill="#626bab"
      />
      <path
        d="M587 358L860 422 1100 478Q1161 493 1158 546L1139 690Q1132 732 1085 726L583 594Q537 581 537 530L541 395Q545 353 587 358Z"
        fill="url(#bezel)"
      />
    </g>
    <path d="M1090 491Q1126 503 1126 530L1108 688Q1100 719 1080 724 1131 732 1138 690L1157 546Q1159 500 1115 483Z" fill="url(#bezelRight)" />
    <path d="M563 385L556 480 551 545Q552 583 575 590 538 577 538 530L542 395Q543 378 552 368Z" fill="url(#bezelLeft)" />
    <ellipse cx="1124" cy="494" rx="22" ry="9" fill="url(#shine)" transform="rotate(28 1124 494)" />
    <Grille />
    <path d={mesh} fill="none" stroke="#001500" />
    <g fill="#022b04" stroke="#011801" strokeWidth=".8">
      <path d="M728 411L772 418 777 433 733 425Z" />
      <path d="M897 449L947 460 938 472 890 463Z" />
      <path d="M692 586L732 595 715 624 670 610Z" />
      <path d="M908 643L952 653 968 688 920 677Z" />
    </g>
    <path d="M733 425L777 434M890 463L934 473M692 586L732 596M908 643L950 653" stroke="#000" strokeDasharray="16 6" />

    <g fill="none" stroke="#10132c" strokeWidth="1.100">
      <path d="M655 311L595 353" strokeDasharray="4 2" />
      {/* grip pads */}
      <path d="M735 322L748 332Q760 338 758 346 757 350 749 355L728 371Q718 378 702 376L680 373" />
      <path d="M758 346Q758 353 750 358L729 374Q718 381 695 377L680 373" />
      <path d="M1043 397Q1026 396 1012 403L990 422Q983 428 987 435 992 443 1010 448" />
      <path d="M985 432Q984 440 996 446L1010 451" />
      {/* button strip */}
      <path d="M748 376L774 355Q777 352 782 353L984 399Q989 401 986 404L962 426Q959 428 955 427L752 380Q747 379 748 376Z" />
      <path d="M750 378L778 356 984 402 960 425" strokeDasharray="5 2" />
    </g>
    <g fill="#0a3d10" stroke="#021a04" strokeWidth="1.400">
      <path d="M782 366L813 372 812 378 779 372Z" />
      <path d="M834 376L841 375 848 378 859 381 857 386 849 386 846 390 838 389 837 385 828 382 829 378 835 379Z" />
      <path d="M870 396L881 383 890 386 893 393 902 390 917 393 911 405 901 403 905 398 893 400 885 397 880 390 876 398Z" />
      <path d="M937 396L955 407 955 410 926 409 926 406Z" />
    </g>

    {/* antenna */}
    <g stroke="#14161c" strokeWidth="1">
      <path d="M1052 389L1087 397 1086 403 1051 396Z" fill="#d9d9d9" />
      <path d="M741 317L1046 382 1042 396 738 331Z" fill="url(#rod)" />
      <path d="M1045 382L1055 387 1052 397 1041 396ZM1050 385L1047 396" fill="#c8c8c8" />
      <path d="M1087 395L1098 394 1097 406 1085 404Z" fill="#bdbdbd" />
      <ellipse cx="1096" cy="400" rx="2.500" ry="6" fill="#ddd" />
      <path d="M1079 402L1075 404 1074 413 1079 411 1080 402M1077 403V414" fill="#8089d0" />
      <path d="M723 334Q723 339 733 339 742 338 742 333L740 330H726Z" fill="#7e89dc" />
      <path d="M726 332V319Q728 313 733 313 739 314 740 320V332Q733 336 726 332Z" fill="#8e9bf2" />
      <path d="M726 321Q733 324 740 321" fill="none" strokeDasharray="3 1" />
      <path d="M730 318V331" stroke="#b8c3ff" strokeWidth="2.400" />
      <path d="M739 318L743 319 740 331" fill="#666" />
    </g>

    {/* axis triad */}
    <g>
      <path d="M345 767V750" stroke="#1b7a22" strokeWidth="3" />
      <path d="M345.500 741L341 752H350Z" fill="#1b7a22" stroke="#0b3d10" strokeWidth=".6" />
      <path d="M345 768L364 772" stroke="#c32020" strokeWidth="3" />
      <path d="M372 775L362 767 360 776Z" fill="#c32020" stroke="#7a1010" strokeWidth=".6" />
      <path d="M345 768L337 774" stroke="#1a1ab0" strokeWidth="3" />
      <path d="M329 778L334 771 340 778 334 781Z" fill="#1a1ab0" />
      <g fontFamily="Liberation Sans" fontSize="10">
        <text x="342" y="739" fill="#1b7a22">Y</text>
        <text x="370" y="778" fill="#c32020">X</text>
        <text x="326" y="783" fill="#1a1ab0">Z</text>
      </g>
    </g>
  </Canvas>
);

export default function App() {
  return (
    <Page>
      <GlobalStyle />
      <TopBar>
        <LogoBox>
          <Logo />
        </LogoBox>
        <Menu>
          {menu.map(([label, w]) => (
            <MenuItem key={label} $w={w}>{label}</MenuItem>
          ))}
          <IconButton $w={38} aria-label="Pin menu">
            <Icon name="pin" size={14} />
          </IconButton>
        </Menu>
        <QuickTools>
          <Tools pitch={26} caret={13} items={["newDoc", "v", "open", "v", "save", "v", "print", "v", "undo", "v"]} />
          <SelectBox>
            <Tools pitch={26} caret={12} items={["cursor", "v"]} />
          </SelectBox>
          <Tools pitch={26} caret={13} items={["traffic", "options", "gear", "v"]} />
        </QuickTools>
        <DocTitle>Bluetooth *</DocTitle>
        <SearchBox>
          <Icon name="prompt" size={17} />
          <input defaultValue="co" aria-label="Search commands" />
          <Icon name="search" />
          <IconButton $w={14} aria-label="Search scope">
            <Caret />
          </IconButton>
        </SearchBox>
        <WindowTools>
          <Tools pitch={26} caret={13} items={["help", "v", "minimize", "restore", "close"]} />
        </WindowTools>
      </TopBar>

      <ToolRow>
        <Grip />
        <Tools
          items={[
            "abc", "measure", "scale", "section2", "gauge", "lightClock", "boxCheck", "boxTick", "sigma", "arrowsX",
            "draftTri", "thickness", "compareDoc", "checkActive", "v", "excel", "|", "|", "rainbow", "flow", "okCircle", "dw", "lifebuoy",
          ]}
        />
        <Divider />
        <Grip />
        <Tools
          items={["zoomFit", "zoomGrey", "prevView", "|", "boardGrey", "sectionView", "viewOrient", "v", "displayStyle", "v", "eye", "v", "appearance", "scene", "oneClick", "v"]}
        />
        <Divider />
        <Grip />
        <Tools
          items={["normalTo", "|", "vFront", "vBack", "vLeft", "vRight", "vTop", "vBottom", "isometric", "trimetric", "dimetric", "|", "flash"]}
        />
        <Divider />
      </ToolRow>

      <Ribbon>
        <Big icon="extrude" label="Extruded|Boss/Base" w={60} />
        <Big icon="revolve" label="Revolved|Boss/Base" w={60} />
        <Small w={141} items={[["swept", "Swept Boss/Base"], ["loft", "Lofted Boss/Base"], ["boundary", "Boundary Boss/Base"]]} />
        <GroupRule />
        <Big icon="cutExtrude" label="Extruded|Cut" w={52} />
        <Big icon="hole" label="Hole|Wizard" w={51} drop />
        <Big icon="cutRevolve" label="Revolved|Cut" w={51} />
        <Small w={111} pad={4} items={[["cutSwept", "Swept Cut"], ["cutLoft", "Lofted Cut"], ["boundaryBlue", "Boundary Cut"]]} />
        <GroupRule $after={1} />
        <Big icon="fillet" label="Fillet" w={36} drop />
        <Big icon="pattern" label="Linear|Pattern" w={46} drop />
        <Small w={64} items={[["rib", "Rib"], ["draft", "Draft"], ["shell", "Shell"]]} />
        <Small w={83} items={[["wrap", "Wrap"], ["intersect", "Intersect"], ["mirror", "Mirror"]]} />
        <GroupRule $after={1} />
        <Big icon="refGeom" label="Reference|Geometry" w={62} drop />
        <Big icon="curves" label="Curves" w={43} drop />
        <GroupRule $after={2} />
        <Big icon="instant" label="Instant3D" w={60} active />
        <GroupRule $after={2} />
        <Big icon="normalTo" label="Normal|To" w={46} />
        <Big icon="isometric" label="Isometric" w={58} />
        <Big icon="thread" label="Cosmetic|Thread" w={54} />
      </Ribbon>

      <TabStrip>
        {tabs.map(([label, w], i) => (
          <RibbonTab key={label} $w={w} $active={i === 0}>{label}</RibbonTab>
        ))}
        <HeadsUp>
          <Tools
            pitch={26}
            caret={14}
            items={["zoomFit", "zoomArea", "prevView", "sectionView", "flashA", "viewOrient", "v", "displayStyle", "v", "eye", "v", "appearance", "scene", "v", "monitor", "v"]}
          />
        </HeadsUp>
        <DocControls>
          <Tools pitch={26} items={["paneLeft", "paneRight", "minimize", "restore", "close"]} />
        </DocControls>
      </TabStrip>

      <Body>
        <Side>
          <Splitter>
            <Dot />
          </Splitter>
          <SideTabs>
            {["part", "property", "config", "target", "display"].map((name, i) => (
              <SideTab key={name} $active={i === 0} aria-label={name}>
                <Icon name={name} />
              </SideTab>
            ))}
            <Chevron aria-label="More tabs">
              <Svg width="20" height="20" viewBox="0 0 20 20">
                <path d="M9 5l5 5-5 5" stroke="#555" strokeWidth="1.800" />
              </Svg>
            </Chevron>
          </SideTabs>
          <FilterBox>
            <Icon name="filter" />
          </FilterBox>
          <TreeArea>
            <Tree>
              <TreeRow $root>
                <Icon name="part" />
                {"Bluetooth  (Default<<Default>_Display State 1>)"}
              </TreeRow>
              {tree.map(([icon, label, open]) => (
                <TreeRow key={label}>
                  <Twist $on={open} />
                  <Icon name={icon} />
                  {label}
                </TreeRow>
              ))}
            </Tree>
            <ScrollTrack>
              <ScrollButton aria-label="Scroll up">
                <Svg width="10" height="10" viewBox="0 0 10 10">
                  <path d="M1 7l4-4 4 4" strokeWidth="1.800" />
                </Svg>
              </ScrollButton>
              <ScrollThumb />
              <ScrollButton $end aria-label="Scroll down">
                <Svg width="10" height="10" viewBox="0 0 10 10">
                  <path d="M1 3l4 4 4-4" strokeWidth="1.800" />
                </Svg>
              </ScrollButton>
            </ScrollTrack>
          </TreeArea>
          <Flyout aria-label="Collapse panel">
            <Dot />
          </Flyout>
        </Side>
        <Viewport>
          <Speaker />
          <TaskPane>
            {["home", "books", "folderOpen", "palette", "ball", "property", "forum"].map((name) => (
              <TaskButton key={name} $active={name === "ball"} aria-label={name}>
                <Icon name={name} />
              </TaskButton>
            ))}
          </TaskPane>
        </Viewport>
      </Body>

      <BottomTabs>
        {["M5 3v8M12 3L7 7l5 4z", "M10 3L5 7l5 4z", "M6 3l5 4-5 4z", "M11 3v8M4 3l5 4-5 4z"].map((d) => (
          <Player key={d} aria-label="Scroll tabs">
            <Svg width="16" height="14" viewBox="0 0 16 14">
              <path d={d} fill="#909090" stroke="#888" />
            </Svg>
          </Player>
        ))}
        <BottomTab $w={56} $active>Model</BottomTab>
        <BottomTab $w={68}>3D Views</BottomTab>
        <BottomTab $w={108}>Motion Study 1</BottomTab>
      </BottomTabs>
      <Status>
        SOLIDWORKS Premium 2016 x64 Edition
        <StatusLines />
        <Units>
          MMGS
          <Svg width="6" height="5" viewBox="0 0 6 5">
            <path d="M0 4l3-4 3 4z" fill="#333" stroke="none" />
          </Svg>
        </Units>
        <Icon name="tag" size={18} />
      </Status>
    </Page>
  );
}
